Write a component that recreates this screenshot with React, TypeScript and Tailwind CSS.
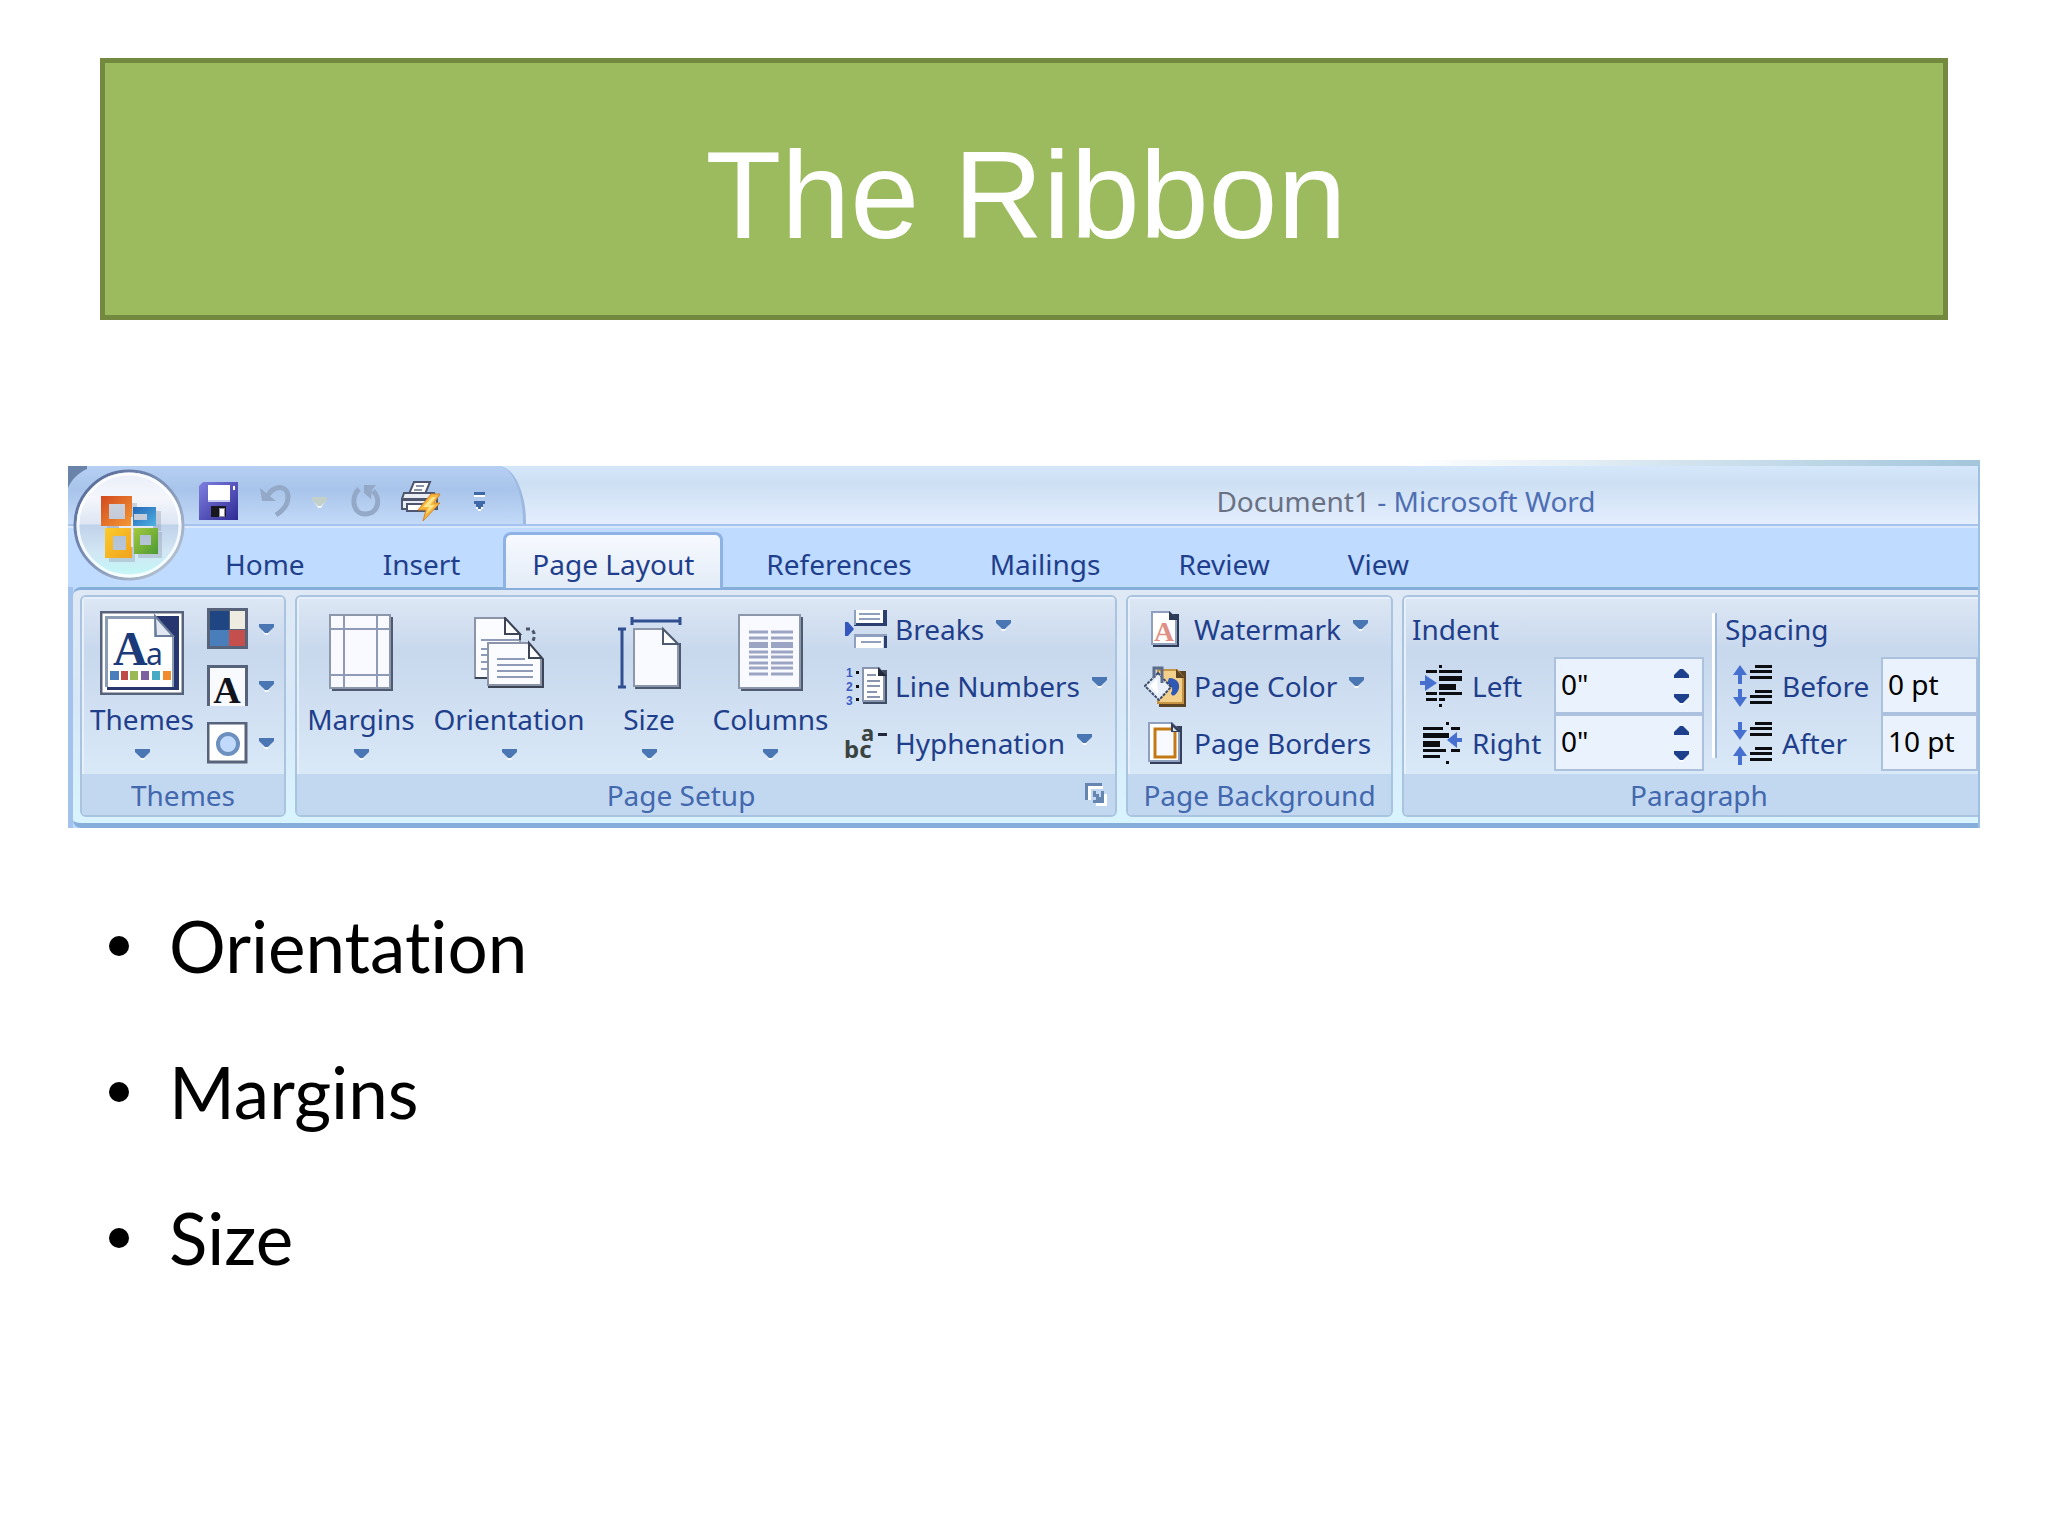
import { useState } from 'react'
import type { ReactNode } from 'react'

const TABS = ['Home', 'Insert', 'Page Layout', 'References', 'Mailings', 'Review', 'View']
const TOPICS = ['Orientation', 'Margins', 'Size']

function Caret({ up = false, className = 'text-[#4a76b4]' }: { up?: boolean; className?: string }) {
  return (
    <svg
      width="15"
      height="9"
      viewBox="0 0 15 9"
      className={`shrink-0 overflow-visible ${className}`}
      aria-hidden="true"
    >
      {!up && <path fill="#fff" opacity="0.8" d="M1 3l5 8h3l5-8z" />}
      <path fill="currentColor" d={up ? 'M6 0h3l6 6v3H0V6z' : 'M0 0h15v3L9 9H6L0 3z'} />
    </svg>
  )
}

/* Quick access toolbar */

function OfficeLogo() {
  return (
    <svg width="112" height="112" viewBox="0 0 112 112" aria-hidden="true">
      <defs>
        <linearGradient id="orb" x1="0" y1="0" x2="0" y2="1">
          <stop offset="0" stopColor="#e9eef8" />
          <stop offset="0.25" stopColor="#f4f6fb" />
          <stop offset="0.49" stopColor="#dde6f3" />
          <stop offset="0.5" stopColor="#bfd2ea" />
          <stop offset="0.75" stopColor="#d3e6f4" />
          <stop offset="0.92" stopColor="#c4f4f6" />
          <stop offset="1" stopColor="#dffafa" />
        </linearGradient>
        <linearGradient id="orbRing" x1="0" y1="0" x2="1" y2="1">
          <stop offset="0" stopColor="#4d6291" />
          <stop offset="0.5" stopColor="#8295b8" />
          <stop offset="1" stopColor="#c2cdd6" />
        </linearGradient>
        <linearGradient id="orange" x1="0" y1="0" x2="1" y2="1">
          <stop offset="0" stopColor="#d2491f" />
          <stop offset="1" stopColor="#f49a35" />
        </linearGradient>
        <linearGradient id="blue" x1="0" y1="0" x2="1" y2="1">
          <stop offset="0" stopColor="#2465b5" />
          <stop offset="1" stopColor="#4fb2e2" />
        </linearGradient>
        <linearGradient id="yellow" x1="0" y1="0" x2="1" y2="1">
          <stop offset="0" stopColor="#fbcb2c" />
          <stop offset="1" stopColor="#f0a21c" />
        </linearGradient>
        <linearGradient id="green" x1="0" y1="0" x2="1" y2="1">
          <stop offset="0" stopColor="#a4c93c" />
          <stop offset="1" stopColor="#4c9a35" />
        </linearGradient>
      </defs>
      <circle cx="56" cy="56" r="54" fill="url(#orb)" stroke="url(#orbRing)" strokeWidth="3" />
      <circle cx="56" cy="56" r="51" fill="none" stroke="#fff" strokeWidth="3" opacity="0.8" />
      <path
        d="M34 34h30v28H34zM64 42h24v20H64zM36 63h26v30H36zM65 63h24v26H65z"
        fill="#8a93a5"
        opacity="0.35"
      />
      <path fill="url(#orange)" fillRule="evenodd" d="M28 27h31v30H28zM36 35v15h16V35z" />
      <path fill="url(#blue)" fillRule="evenodd" d="M60 38h23v19H60zM61 45v6h13v-6z" />
      <path fill="url(#yellow)" fillRule="evenodd" d="M32 59h27v30H32zM40 67v14h13V67z" />
      <path fill="url(#green)" fillRule="evenodd" d="M61 59h24v26H61zM67 66v10h11V66z" />
      <path stroke="#f3f6fb" strokeWidth="2" d="M59 48v30M46 58h34" opacity="0.8" />
    </svg>
  )
}

function SaveIcon() {
  return (
    <svg width="39" height="38" viewBox="0 0 39 38" aria-hidden="true">
      <defs>
        <linearGradient id="disk" x1="0" y1="0" x2="1" y2="1">
          <stop offset="0" stopColor="#7f7fe0" />
          <stop offset="1" stopColor="#2f2b96" />
        </linearGradient>
      </defs>
      <path fill="url(#disk)" d="M4 0h35v38H0V4z" />
      <path fill="#fff" d="M9 3h22v15H9z" />
      <path fill="#c9cdf0" d="M9 18h22v2H9z" />
      <path fill="#fff" d="M34 4h2v4h-2z" />
      <path fill="#17171f" d="M12 24h15v11H12z" />
      <path fill="#8d8d9b" d="M20 26h6v9h-6z" />
      <path fill="#fff" d="M21 27h4v7h-4z" />
    </svg>
  )
}

function UndoIcon() {
  return (
    <svg width="34" height="36" viewBox="0 0 34 36" fill="none" aria-hidden="true">
      <path d="M9 14C16 1 30 2 30 14c0 8-4 13-12 18" stroke="#94a8c8" strokeWidth="5" />
      <path d="M2 5l2 13h14z" fill="#94a8c8" />
    </svg>
  )
}

function RedoIcon() {
  return (
    <svg width="30" height="34" viewBox="0 0 30 34" fill="none" aria-hidden="true">
      <path d="M8 5C0 12 1 30 14 30c14 0 16-16 8-23" stroke="#94a8c8" strokeWidth="5" />
      <path d="M13 1h12l-4 5-1 9-7-6z" fill="#94a8c8" />
    </svg>
  )
}

function QuickPrintIcon() {
  return (
    <svg width="40" height="42" viewBox="0 0 40 42" aria-hidden="true">
      <path fill="#fff" stroke="#4d566e" strokeWidth="2" d="M13 2h16l-5 12H8z" />
      <path stroke="#8b93a6" strokeWidth="2" d="M15 6h8M13 10h8" />
      <path fill="#e9ecf3" stroke="#4d566e" strokeWidth="2" d="M3 13h30l3 6v10H1V19z" />
      <path fill="#4d566e" d="M2 18h33v3H2z" />
      <path fill="#fff" stroke="#4d566e" strokeWidth="2" d="M6 24h20v7H6z" />
      <path fill="#f6b73c" stroke="#d6842a" strokeWidth="1" d="M30 14h9l-6 9h6L22 41l3-11h-8z" />
      <path fill="#fde48a" d="M31 17h4l-6 8h5l-9 9 3-7h-6z" />
    </svg>
  )
}

function CustomizeIcon() {
  return (
    <svg width="13" height="19" viewBox="0 0 13 19" shapeRendering="crispEdges" aria-hidden="true">
      <path fill="#3f68a6" d="M1 0h11v3H1zM1 9h11v3h-2v3H8v2H5v-2H3v-3H1z" />
      <path fill="#fff" d="M1 3h11v2H1zM3 15h2v2H3zM8 15h2v2H8zM5 17h3v2H5z" />
    </svg>
  )
}

/* Themes */

function ThemesIcon() {
  return (
    <svg width="84" height="84" viewBox="0 0 84 84" aria-hidden="true">
      <path fill="#fff" stroke="#56637b" strokeWidth="3" d="M1 1h82v82H1z" />
      <path fill="#27366f" d="M7 5h72v74H7z" />
      <path fill="#8b9db5" d="M5 5h50v20h19v51H5z" />
      <path fill="#fff" d="M8 8h46v18h18v50H8z" />
      <path fill="#e1e7f3" stroke="#6c7d9b" strokeWidth="2" d="M55 5l18 20H56z" />
      <text x="13" y="54" fontFamily="'Liberation Serif', serif" fontSize="48" fontWeight="700" fill="#1b3a7a">
        A
      </text>
      <text x="46" y="54" fontFamily="'Noto Sans', sans-serif" fontSize="30" fill="#1b3a7a">
        a
      </text>
      <path fill="#4a7ebb" d="M10 60h9v9h-9z" />
      <path fill="#be4b48" d="M21 60h7v9h-7z" />
      <path fill="#98b954" d="M30 60h8v9h-8z" />
      <path fill="#7d60a0" d="M41 60h8v9h-8z" />
      <path fill="#46aac5" d="M52 60h8v9h-8z" />
      <path fill="#f08c2e" d="M63 60h8v9h-8z" />
    </svg>
  )
}

function ColorsIcon() {
  return (
    <svg width="41" height="41" viewBox="0 0 41 41" shapeRendering="crispEdges" aria-hidden="true">
      <path fill="#56637b" d="M0 0h41v41H0z" />
      <path fill="#1f4583" d="M3 3h19v19H3z" />
      <path fill="#eeece1" d="M23 3h15v18H23z" />
      <path fill="#4a7ebb" d="M3 22h19v16H3z" />
      <path fill="#c44f4c" d="M22 22h16v16H22z" />
    </svg>
  )
}

function FontsIcon() {
  return (
    <svg width="41" height="41" viewBox="0 0 41 41" className="overflow-visible" aria-hidden="true">
      <path fill="#56637b" d="M0 0h41v41H0z" />
      <path fill="#f8fafd" d="M3 3h35v38H3z" />
      <text
        x="20"
        y="38"
        textAnchor="middle"
        fontFamily="'Liberation Serif', serif"
        fontSize="38"
        fontWeight="700"
        fill="#10131c"
      >
        A
      </text>
    </svg>
  )
}

function EffectsIcon() {
  return (
    <svg width="41" height="42" viewBox="0 0 41 42" aria-hidden="true">
      <path fill="#fff" stroke="#56637b" strokeWidth="3" d="M1 1h38v39H1z" />
      <circle cx="21" cy="22" r="10" fill="#c1dafc" stroke="#6e90bf" strokeWidth="4" />
    </svg>
  )
}

/* Page setup */

function MarginsIcon() {
  return (
    <svg width="65" height="78" viewBox="0 0 65 78" aria-hidden="true">
      <path fill="#4d5a70" d="M3 3h61v74H3z" />
      <path fill="#f8faff" stroke="#8d97ab" strokeWidth="2" d="M1 1h60v73H1z" />
      <path stroke="#8f9ab8" strokeWidth="2" d="M15 2v71M48 2v71M2 15h59M2 61h59" />
    </svg>
  )
}

function OrientationIcon() {
  return (
    <svg width="70" height="72" viewBox="0 0 70 72" aria-hidden="true">
      <path fill="#fafcff" stroke="#8b94a8" strokeWidth="2" d="M1 1h30l15 16v44H1z" />
      <path fill="#fff" stroke="#3c4556" strokeWidth="2" d="M31 1v16h15z" />
      <path stroke="#3c4556" strokeWidth="2" d="M46 17v6M1 61h13" />
      <path stroke="#8f9ab8" strokeWidth="2" d="M7 23h38M7 32h7M7 38h7M7 45h7M7 52h7" />
      <path fill="#3c4556" d="M14 68h56v3H14zM67 42h3v28h-3z" />
      <path fill="#fafcff" stroke="#8b94a8" strokeWidth="2" d="M14 26h40l13 16v26H14z" />
      <path fill="#fff" stroke="#3c4556" strokeWidth="2" d="M55 26v15h13z" />
      <path stroke="#8f9ab8" strokeWidth="2" d="M23 42h28M23 48h36M23 54h36M23 60h36" />
      <path stroke="#4a556c" strokeWidth="3" strokeDasharray="4 3" fill="none" d="M52 12h5c4 3 4 7 2 12" />
    </svg>
  )
}

function SizeIcon() {
  return (
    <svg width="65" height="74" viewBox="0 0 65 74" aria-hidden="true">
      <path stroke="#2f4f91" strokeWidth="3" d="M16 5h47M15 1v8M63 1v8M5 14v57M1 13h8M1 71h8" />
      <path fill="#4d5a70" d="M18 70h46v3H18zM61 27h3v46h-3z" />
      <path fill="#f8faff" stroke="#8d97ab" strokeWidth="2" d="M17 13h29l15 15v42H17z" />
      <path fill="#fff" stroke="#4d5a70" strokeWidth="2" d="M46 13v15h15z" />
    </svg>
  )
}

function ColumnsIcon() {
  return (
    <svg width="66" height="78" viewBox="0 0 66 78" aria-hidden="true">
      <path fill="#4d5a70" d="M3 3h62v74H3z" />
      <path fill="#f8faff" stroke="#8d97ab" strokeWidth="2" d="M1 1h61v73H1z" />
      <path
        stroke="#9ba5c3"
        strokeWidth="3"
        d="M11 18h19M33 18h22M11 24h19M33 24h22M11 38h19M33 38h22M11 43h19M33 43h22M11 49h19M33 49h22M11 54h19M33 54h22M11 60h19M33 60h22"
      />
      <path stroke="#9ba5c3" strokeWidth="6" d="M11 31h19M33 31h22" />
    </svg>
  )
}

function BreaksIcon() {
  return (
    <svg width="42" height="40" viewBox="0 0 42 40" aria-hidden="true">
      <path fill="#2c4070" d="M38 1h4v16H9v-4h29z" />
      <path fill="#fff" d="M11 1h27v13H11z" />
      <path fill="#8fa0bf" d="M9 1h2v15H9zM14 4h21v2H14zM14 9h21v2H14z" />
      <path fill="#8fa0bf" d="M9 25h33v3H9zM9 25h2v14H9z" />
      <path fill="#fff" d="M11 28h27v11H11z" />
      <path fill="#8fa0bf" d="M16 32h20v2H16z" />
      <path fill="#2c4070" d="M39 27h3v12h-3z" />
      <path fill="#3557bd" d="M0 13h3l6 7-6 7H0z" />
    </svg>
  )
}

function LineNumbersIcon() {
  return (
    <svg width="42" height="42" viewBox="0 0 42 42" className="overflow-visible" aria-hidden="true">
      <g fontFamily="'Liberation Sans', sans-serif" fontSize="12" fontWeight="700" fill="#3b5cc4">
        <text x="1" y="12">1</text>
        <text x="1" y="26">2</text>
        <text x="1" y="40">3</text>
      </g>
      <path fill="#111" d="M11 6h3v3h-3zM11 20h3v3h-3zM11 33h3v3h-3z" />
      <path fill="#3f4d66" d="M18 5h24v34H18z" />
      <path fill="#fff" stroke="#8795ae" strokeWidth="2" d="M18 3h16l5 7v26H18z" />
      <path fill="#22293a" d="M33 2l9 9h-9z" />
      <path stroke="#8795ae" strokeWidth="2" d="M22 10h9M22 16h13M22 21h13M22 27h10M22 32h13" />
    </svg>
  )
}

function HyphenationIcon() {
  return (
    <svg width="42" height="34" viewBox="0 0 42 34" className="overflow-visible" aria-hidden="true">
      <g fontFamily="'Noto Sans', sans-serif" fontWeight="700" fill="#3b4341">
        <text x="-1" y="32" fontSize="24">bc</text>
        <text x="16" y="15" fontSize="22">a</text>
      </g>
      <path fill="#22293a" d="M33 7h9v3h-9z" />
    </svg>
  )
}

function LauncherIcon() {
  return (
    <svg width="22" height="23" viewBox="0 0 22 23" shapeRendering="crispEdges" aria-hidden="true">
      <path fill="#fff" d="M3 3h15v3H6v11H3zM19 11h3v12h-11v-3h8z" />
      <path fill="#6685b0" d="M0 0h17v3H3v14H0zM8 8h3v3h3v3h2V8h3v12H8v-3h3v-3H8z" />
    </svg>
  )
}

/* Page background */

function WatermarkIcon() {
  return (
    <svg width="28" height="36" viewBox="0 0 28 36" className="overflow-visible" aria-hidden="true">
      <path fill="#2d3b57" d="M2 3h26v33H2z" />
      <path fill="#fff" stroke="#8fa0bf" strokeWidth="2" d="M1 1h17l7 7v25H1z" />
      <path fill="#2d3b57" d="M18 0l10 9H18z" />
      <text
        x="13"
        y="30"
        textAnchor="middle"
        fontFamily="'Liberation Serif', serif"
        fontSize="28"
        fontWeight="700"
        fill="#df9085"
      >
        A
      </text>
    </svg>
  )
}

function PageColorIcon() {
  return (
    <svg width="42" height="42" viewBox="0 0 42 42" aria-hidden="true">
      <path fill="#5c4524" d="M15 6h27v36H15z" />
      <path fill="#f2cf8a" stroke="#c59542" strokeWidth="2" d="M14 5h19l6 7v26H14z" />
      <path fill="#5c4524" d="M32 4l9 9h-9z" />
      <path fill="#2f59b4" d="M25 13c9 0 12 7 9 13-2 4-6 7-7 2 3-4 0-8-4-9z" />
      <path fill="#e9f0fa" stroke="#3c4c6b" strokeWidth="2" strokeDasharray="3 1" d="M14 8L1 21l14 14 12-13z" />
      <path fill="#fff" d="M13 14l-7 7 8 8z" />
      <path fill="none" stroke="#5b6c8c" strokeWidth="3" d="M10 13V3h8v15" />
    </svg>
  )
}

function PageBordersIcon() {
  return (
    <svg width="34" height="42" viewBox="0 0 34 42" aria-hidden="true">
      <path fill="#34405c" d="M2 4h32v38H2z" />
      <path fill="#fff" stroke="#8fa0bf" strokeWidth="2" d="M1 1h23l7 8v30H1z" />
      <path fill="#f8faff" stroke="#c47a14" strokeWidth="3" d="M7 7h20v28H7z" />
      <path fill="#34405c" d="M23 0l11 10H23z" />
      <path fill="#dfe7f2" d="M25 5l4 4h-4z" />
    </svg>
  )
}

/* Paragraph */

function IndentLeftIcon() {
  return (
    <svg width="42" height="42" viewBox="0 0 42 42" aria-hidden="true">
      <path
        fill="#0b0d10"
        d="M19 0h3v3h-3zM6 5h11v3H6zM19 5h23v3H19zM19 11h23v5H19zM19 19h17v6H19zM6 27h11v3H6zM19 27h23v3H19zM6 33h11v3H6zM19 33h6v3h-6zM19 39h3v3h-3z"
      />
      <path fill="#4670d0" d="M0 16h5v-6l12 8-12 8v-6H0z" />
    </svg>
  )
}

function IndentRightIcon() {
  return (
    <svg width="42" height="42" viewBox="0 0 42 42" aria-hidden="true">
      <path
        fill="#0b0d10"
        d="M26 0h3v3h-3zM3 5h20v3H3zM31 5h9v3h-9zM3 11h26v5H3zM3 19h17v6H3zM3 27h23v3H3zM31 27h9v3h-9zM3 33h17v3H3zM26 39h3v3h-3z"
      />
      <path fill="#4670d0" d="M27 18l10-8v6h5v4h-5v6z" />
    </svg>
  )
}

const ARROW_UP = 'M7 0l7 10H9v9H5v-9H0z'
const ARROW_DOWN = 'M5 0h4v8h5L7 18 0 8h5z'

function SpacingIcon({ inward = false }: { inward?: boolean }) {
  return (
    <svg width="39" height="42" viewBox="0 0 39 42" className="overflow-visible" aria-hidden="true">
      <path
        fill="#0b0d10"
        d="M22 0h17v3H22zM17 5h22v3H17zM17 11h22v3H17zM22 25h17v3H22zM17 30h22v3H17zM17 36h22v3H17z"
      />
      <path fill="#4670d0" d={inward ? ARROW_DOWN : ARROW_UP} />
      <g transform="translate(0 24)">
        <path fill="#4670d0" d={inward ? ARROW_UP : ARROW_DOWN} />
      </g>
    </svg>
  )
}

interface GroupProps {
  title: string
  className?: string
  titleClassName?: string
  launcher?: boolean
  children: ReactNode
}

function Group({ title, className = '', titleClassName = '', launcher = false, children }: GroupProps) {
  return (
    <section
      aria-label={title}
      className={`flex flex-col overflow-hidden border-2 border-[#aac3de] bg-linear-to-b from-[#dde7f4] from-0% via-[#c8d8ed] via-25% to-[#dbeaf8] to-85% ${className}`}
    >
      <div className="flex h-[177px] items-center shadow-[inset_2px_2px_0_#e6f0fa]">{children}</div>
      <div className="flex h-[41px] items-center bg-[#c2d8f0] text-[#4468ae]">
        <h2 className={`flex-1 text-center ${titleClassName}`}>{title}</h2>
        {launcher && (
          <button type="button" aria-label={`${title} options`} className="mr-2">
            <LauncherIcon />
          </button>
        )}
      </div>
    </section>
  )
}

function BigButton({ label, icon, className = '' }: { label: string; icon: ReactNode; className?: string }) {
  return (
    <button type="button" className={`flex h-[171px] flex-col items-center ${className}`}>
      <span className="flex h-[105px] items-center justify-center">{icon}</span>
      <span>{label}</span>
      <Caret className="mt-4 text-[#4a76b4]" />
    </button>
  )
}

interface SmallButtonProps {
  label: string
  icon: ReactNode
  menu?: boolean
}

function SmallButton({ label, icon, menu = false }: SmallButtonProps) {
  return (
    <button type="button" className="flex h-[57px] items-center whitespace-nowrap">
      <span className="mr-2 flex w-[42px] justify-center">{icon}</span>
      <span>{label}</span>
      {menu && <Caret className="mb-2 ml-3 text-[#4a76b4]" />}
    </button>
  )
}

function ThemeOption({ label, icon }: { label: string; icon: ReactNode }) {
  return (
    <button type="button" aria-label={label} className="flex h-[57px] items-center gap-[11px]">
      {icon}
      <Caret />
    </button>
  )
}

interface SpinFieldProps {
  id: string
  label: string
  icon: ReactNode
  initial: string
  spinner?: boolean
}

function SpinField({ id, label, icon, initial, spinner = false }: SpinFieldProps) {
  const [value, setValue] = useState(initial)

  return (
    <>
      <label htmlFor={id} className="flex items-center gap-[10px] pl-2">
        {icon}
        {label}
      </label>
      <div className="flex h-[57px] items-center border-2 border-[#abc1de] bg-[#eaf2fd]">
        <input
          id={id}
          value={value}
          onChange={(e) => setValue(e.target.value)}
          className="w-full min-w-0 flex-1 bg-transparent pb-1 pl-[5px] text-black outline-none"
        />
        {spinner && (
          <div className="mr-[13px] flex flex-col gap-4">
            <button type="button" aria-label={`Increase ${label}`}>
              <Caret up className="text-[#1d3f8c]" />
            </button>
            <button type="button" aria-label={`Decrease ${label}`}>
              <Caret className="text-[#1d3f8c]" />
            </button>
          </div>
        )}
      </div>
    </>
  )
}

function TitleBar() {
  return (
    <div className="flex h-[60px] border-b-2 border-[#a5c3ee] bg-linear-to-b from-[#d5e8fb] via-[#cde0f3] via-30% to-[#e4eefe]">
      <div className="flex w-[458px] shrink-0 items-center rounded-tr-[28px_56px] border-r-3 border-[#9db9e0] bg-linear-to-b from-[#b5d0f3] via-[#a8c4ea] via-40% to-[#c3daf8] pt-3 pl-[131px]">
        <button type="button" aria-label="Save" className="mr-5">
          <SaveIcon />
        </button>
        <button type="button" aria-label="Undo" className="mr-5">
          <UndoIcon />
        </button>
        <button type="button" aria-label="Undo history" className="mr-6">
          <Caret className="text-[#c3cfc9]" />
        </button>
        <button type="button" aria-label="Repeat" className="mr-5">
          <RedoIcon />
        </button>
        <button type="button" aria-label="Quick Print" className="mr-8">
          <QuickPrintIcon />
        </button>
        <button type="button" aria-label="Customize Quick Access Toolbar">
          <CustomizeIcon />
        </button>
      </div>
      <p className="flex-1 self-center pt-3 pl-[308px] text-center whitespace-nowrap text-[#4e6fb3]">
        <span className="text-[#6a7183]">Document1</span> - Microsoft Word
      </p>
    </div>
  )
}

function Ribbon() {
  const [active, setActive] = useState('Page Layout')

  return (
    <div className="relative border-r-2 border-[#9dc0e6] bg-[#bfdbff] font-['Noto_Sans','Open_Sans',sans-serif] text-[28px] leading-7 text-[#1f3f8c]">
      <TitleBar />

      {/* Window corner showing the desktop behind it */}
      <svg width="19" height="22" viewBox="0 0 19 22" className="absolute top-0 left-0" aria-hidden="true">
        <path fill="#6a83a8" d="M0 0h19v3C10 7 4 13 0 22z" />
      </svg>

      <button type="button" aria-label="Office Button" className="absolute top-[3px] left-[5px] rounded-full">
        <OfficeLogo />
      </button>

      <nav className="flex h-[62px] items-end border-t-2 border-[#d8e8fd] pl-[118px]">
        {TABS.map((tab) => (
          <button
            key={tab}
            type="button"
            onClick={() => setActive(tab)}
            className={
              tab === active
                ? 'relative z-10 mx-1 h-14 rounded-t-lg border-3 border-b-0 border-[#8db2e3] bg-linear-to-b from-[#f7faff] to-[#e3ecf7] px-[26px] pt-1'
                : 'h-14 px-[39px] pt-[7px]'
            }
          >
            {tab}
          </button>
        ))}
      </nav>

      <div className="border-l-5 border-[#a3c2ee]">
        <div className="-mt-px flex gap-[9px] overflow-hidden rounded-l-lg border-t-3 border-b-5 border-[#86aeda] bg-linear-to-b from-[#dfe9f5] via-[#d8e8f8] to-[#d9f4ff] pt-[5px] pb-[6px] pl-[7px]">
          <Group title="Themes" className="w-[206px] rounded-md">
            <BigButton label="Themes" icon={<ThemesIcon />} className="w-[120px]" />
            <div className="ml-[5px]">
              <ThemeOption label="Theme Colors" icon={<ColorsIcon />} />
              <ThemeOption label="Theme Fonts" icon={<FontsIcon />} />
              <ThemeOption label="Theme Effects" icon={<EffectsIcon />} />
            </div>
          </Group>

          <Group title="Page Setup" className="w-[822px] rounded-md" titleClassName="pr-5" launcher>
            <BigButton label="Margins" icon={<MarginsIcon />} className="w-[128px]" />
            <BigButton label="Orientation" icon={<OrientationIcon />} className="w-[168px]" />
            <BigButton label="Size" icon={<SizeIcon />} className="w-[112px]" />
            <BigButton label="Columns" icon={<ColumnsIcon />} className="w-[131px]" />
            <div className="ml-[9px]">
              <SmallButton label="Breaks" icon={<BreaksIcon />} menu />
              <SmallButton label="Line Numbers" icon={<LineNumbersIcon />} menu />
              <SmallButton label="Hyphenation" icon={<HyphenationIcon />} menu />
            </div>
          </Group>

          <Group title="Page Background" className="w-[267px] rounded-md">
            <div className="ml-4">
              <SmallButton label="Watermark" icon={<WatermarkIcon />} menu />
              <SmallButton label="Page Color" icon={<PageColorIcon />} menu />
              <SmallButton label="Page Borders" icon={<PageBordersIcon />} />
            </div>
          </Group>

          <Group title="Paragraph" className="flex-1 rounded-l-md border-r-0" titleClassName="pl-4">
            <div className="grid w-[300px] grid-cols-[1fr_150px] grid-rows-[57px_57px_57px] items-center pl-2">
              <h3 className="col-span-2">Indent</h3>
              <SpinField id="indent-left" label="Left" icon={<IndentLeftIcon />} initial={'0"'} spinner />
              <SpinField id="indent-right" label="Right" icon={<IndentRightIcon />} initial={'0"'} spinner />
            </div>
            <div className="ml-2 h-[145px] w-[5px] border-r-2 border-[#9db9dd] bg-white" />
            <div className="grid flex-1 grid-cols-[156px_1fr] grid-rows-[57px_57px_57px] items-center pl-2">
              <h3 className="col-span-2">Spacing</h3>
              <SpinField id="spacing-before" label="Before" icon={<SpacingIcon />} initial="0 pt" />
              <SpinField id="spacing-after" label="After" icon={<SpacingIcon inward />} initial="10 pt" />
            </div>
          </Group>
        </div>
      </div>
    </div>
  )
}

export default function App() {
  return (
    <main className="min-h-screen bg-white pt-[58px]">
      <header className="mx-[100px] flex h-[262px] items-center justify-center border-5 border-[#72893f] bg-[#9cba5e]">
        <h1 className="pt-3 pl-1 font-['Liberation_Sans',Arial,sans-serif] text-[124px] leading-none text-white">
          The Ribbon
        </h1>
      </header>

      <div className="mx-[68px] mt-[140px]">
        <div className="h-[6px] bg-linear-to-r from-white from-70% to-[#a3c6dc]" />
        <Ribbon />
      </div>

      <ul className="mt-[45px] ml-[109px] font-['Lato',sans-serif] text-[71px] leading-[146px] text-black [font-variant-ligatures:none]">
        {TOPICS.map((topic) => (
          <li key={topic} className="flex items-center gap-10">
            <span className="size-5 shrink-0 rounded-full bg-black" />
            {topic}
          </li>
        ))}
      </ul>
    </main>
  )
}
